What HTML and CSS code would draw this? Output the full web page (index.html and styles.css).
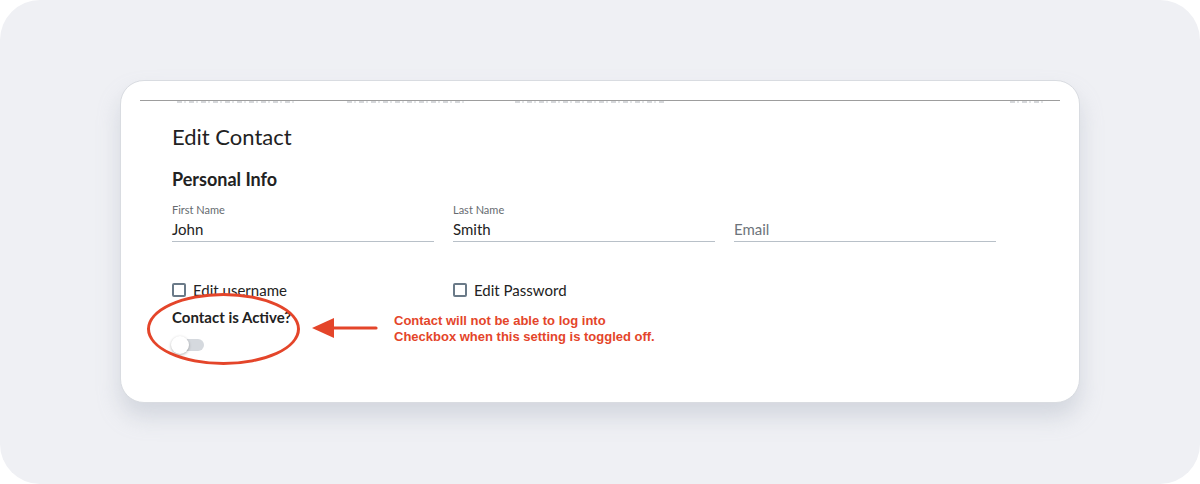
FILE: index.html
```html
<!DOCTYPE html>
<html lang="en">
<head>
    <meta charset="UTF-8">
    <meta name="viewport" content="width=device-width, initial-scale=1.0">
    <title>Edit Contact</title>
    <link rel="stylesheet" href="styles.css">
</head>
<body>
    <div class="frame">
        <div class="card">
            <!-- tab bar scrolled up under the header line: only its bottom edge peeks out -->
            <div class="tabs-clip">
                <span class="tab t1"></span>
                <span class="tab t2"></span>
                <span class="tab t3"></span>
                <span class="tab t4"></span>
            </div>

            <div class="form">
                <h2 class="title">Edit Contact</h2>
                <h3 class="section">Personal Info</h3>

                <div class="fields">
                    <div class="field">
                        <label>First Name</label>
                        <div class="value">John</div>
                    </div>
                    <div class="field">
                        <label>Last Name</label>
                        <div class="value">Smith</div>
                    </div>
                    <div class="field">
                        <label>&nbsp;</label>
                        <div class="value placeholder">Email</div>
                    </div>
                </div>

                <div class="checks">
                    <div class="check"><span class="box"></span>Edit username</div>
                    <div class="check"><span class="box"></span>Edit Password</div>
                </div>

                <div class="active-row">
                    <div class="active">
                        <div class="active-label">Contact is Active?</div>
                        <div class="toggle"><span class="track"></span><span class="knob"></span></div>
                        <div class="circle"></div>
                    </div>
                    <svg class="arrow" width="66" height="22" viewBox="0 0 66 22">
                        <path d="M0 11 L22 1 L22 21 Z" fill="#e4452a"/>
                        <path d="M20 11 H64" stroke="#e4452a" stroke-width="3.2" stroke-linecap="round"/>
                    </svg>
                    <p class="note">Contact will not be able to log into<br>Checkbox when this setting is toggled off.</p>
                </div>
            </div>
        </div>
    </div>
</body>
</html>
```

FILE: styles.css
```css
body { margin: 0; background: #fff; font-family: Lato, "Open Sans", sans-serif; color: #222; }
.frame { width: 1200px; height: 484px; box-sizing: border-box; padding: 80px 120px; background: #eff0f4; border-radius: 40px; }
.card { height: 323px; box-sizing: border-box; padding: 19px 19px 0; background: #fff; border: 1px solid #d9dce1; border-radius: 24px; box-shadow: 0 14px 22px rgba(160, 168, 182, 0.35); }

.tabs-clip { display: flex; height: 2px; border-top: 1px solid #9d9d9d; }
.tab { display: block; height: 2px; background: repeating-linear-gradient(90deg, #d6d8db 0 5px, transparent 5px 7px, #e2e4e6 7px 9px, transparent 9px 12px); }
.t1 { margin-left: 37px; width: 120px; }
.t2 { margin-left: 50px; width: 118px; }
.t3 { margin-left: 50px; width: 150px; }
.t4 { margin-left: auto; margin-right: 15px; width: 35px; }

.form { padding-left: 32px; }
.title { margin: 20px 0 0; font-size: 22px; font-weight: 400; line-height: 28px; color: #222; }
.section { margin: 17px 0 0; font-size: 18px; font-weight: 700; line-height: 22px; }

.fields { display: grid; grid-template-columns: repeat(3, 262px); column-gap: 19px; margin-top: 13px; }
.field label { display: block; font-size: 11px; line-height: 14px; color: #666b70; }
.value { padding: 3px 0 3px; font-size: 15px; line-height: 18px; border-bottom: 1.5px solid #b8c0c8; }
.placeholder { color: #6d747b; }

.checks { display: grid; grid-template-columns: repeat(2, 281px); margin-top: 39px; }
.check { display: flex; align-items: center; font-size: 15px; line-height: 18px; color: #222; }
.box { width: 14px; height: 14px; box-sizing: border-box; margin-right: 7px; border: 2px solid #6a7a88; border-radius: 2px; }

.active-row { display: flex; align-items: center; margin-top: 9px; }
.active { position: relative; width: 128px; white-space: nowrap; }
.active-label { font-size: 15px; font-weight: 700; line-height: 18px; }
.toggle { position: relative; width: 34px; height: 20px; margin-top: 9px; margin-left: -1px; }
.track { position: absolute; left: 4px; top: 4px; width: 29px; height: 12px; border-radius: 6px; background: #d5d9de; }
.knob { position: absolute; left: 0; top: 1px; width: 18px; height: 18px; border-radius: 50%; background: #fff; box-shadow: 0 1px 3px rgba(0, 0, 0, 0.3); }
.circle { position: absolute; left: -25px; top: -15px; width: 153px; height: 72px; box-sizing: border-box; border: 3px solid #e4452a; border-radius: 50%; }

.arrow { margin-left: 12px; margin-top: -8px; }
.note { margin: -6px 0 0 16px; font-family: "Liberation Sans", Arial, sans-serif; font-size: 13px; font-weight: 700; line-height: 16px; color: #e4452a; }
```
